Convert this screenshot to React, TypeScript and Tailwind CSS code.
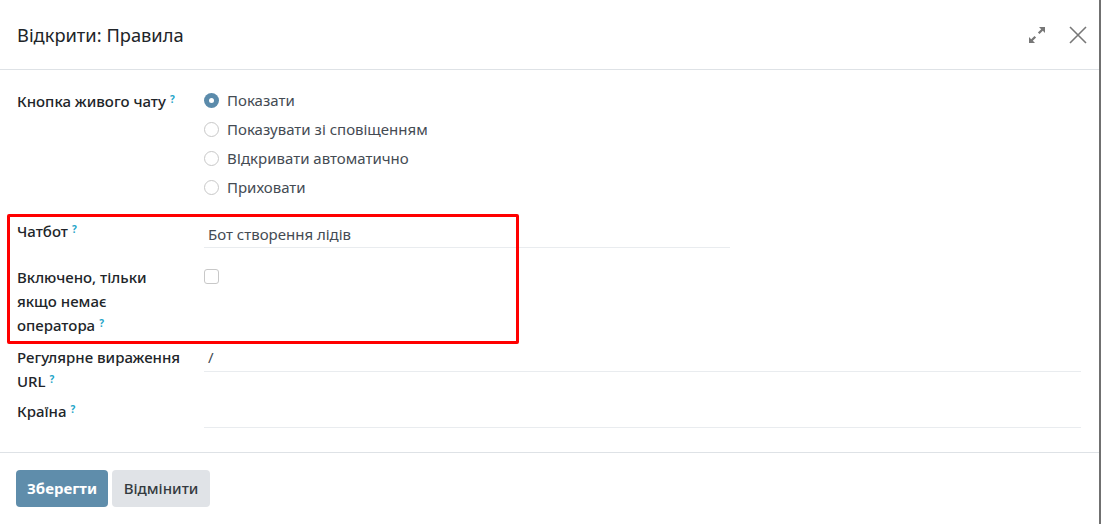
import React from "react";

const Q = () => (
  <sup className="relative -top-[4px] ml-[4px] text-[10px] font-bold leading-none text-[#1fa5c8]">?</sup>
);

function Radio({ checked, label }: { checked?: boolean; label: string }) {
  return (
    <div className="flex h-[29px] items-center">
      {checked ? (
        <span className="flex h-[15px] w-[15px] items-center justify-center rounded-full bg-[#5b8bab]">
          <span className="h-[5px] w-[5px] rounded-full bg-white" />
        </span>
      ) : (
        <span className="h-[15px] w-[15px] rounded-full border border-[#c8c8c8] bg-white" />
      )}
      <span className="ml-[8px] text-[15px] text-[#444b53]">{label}</span>
    </div>
  );
}

const labelCls = "w-[187px] pr-[17px] text-[15px] font-medium leading-[24px] text-[#212529]";

export default function App() {
  return (
    <div
      className="relative h-[524px] w-[1101px] overflow-hidden bg-white text-[#212529]"
      style={{ fontFamily: '"Noto Sans", "Open Sans", sans-serif' }}
    >
      <div className="flex h-full w-[1099px] flex-col">
        {/* header */}
        <div className="flex h-[70px] items-center border-b border-[#dee2e6] pl-[17px] pr-[12px]">
          <h1 className="flex-1 text-[18.3px] font-normal text-[#212529]">Відкрити: Правила</h1>
          <svg width="20" height="20" viewBox="0 0 20 20" className="mr-[22px]" fill="#777">
            <path d="M12 2h6v6l-2.2-2.2-3.3 3.3-1.6-1.6 3.3-3.3z" />
            <path d="M8 18H2v-6l2.2 2.2 3.3-3.3 1.6 1.6-3.3 3.3z" />
          </svg>
          <svg width="18" height="18" viewBox="0 0 18 18" stroke="#777" strokeWidth="1.6" fill="none">
            <path d="M1 1l16 16M17 1L1 17" />
          </svg>
        </div>

        {/* body */}
        <div className="relative flex-1 pl-[17px] pr-[18px] pt-[16px]">
          <div className="flex">
            <div className={`${labelCls} pt-[3px]`}>
              Кнопка живого чату<Q />
            </div>
            <div className="flex flex-col">
              <Radio checked label="Показати" />
              <Radio label="Показувати зі сповіщенням" />
              <Radio label="ВІдкривати автоматично" />
              <Radio label="Приховати" />
            </div>
          </div>

          <div className="mt-[17px] flex">
            <div className={labelCls}>
              Чатбот<Q />
            </div>
            <div className="w-[526px] border-b border-[#e9ecef] pb-[2px] pl-[4px] pt-[4px] text-[15px] leading-[22px] text-[#444b53]">
              Бот створення лідів
            </div>
          </div>

          <div className="mt-[17px] flex">
            <div className={labelCls}>
              Включено, тільки якщо немає оператора<Q />
            </div>
            <div className="pt-[4px]">
              <span className="block h-[15px] w-[15px] rounded-[3px] border border-[#c8c8c8] bg-white" />
            </div>
          </div>

          <div className="mt-[8px] flex">
            <div className={labelCls}>
              Регулярне вираження URL<Q />
            </div>
            <div className="h-[27px] flex-1 border-b border-[#e9ecef] pl-[4px] pt-[1px] text-[15px] leading-[22px] text-[#444b53]">
              /
            </div>
          </div>

          <div className="mt-[6px] flex">
            <div className={labelCls}>
              Країна<Q />
            </div>
            <div className="h-[29px] flex-1 border-b border-[#e9ecef]" />
          </div>
        </div>

        {/* footer */}
        <div className="flex h-[72px] items-start gap-[4px] border-t border-[#dee2e6] pl-[16px] pt-[17px]">
          <button className="h-[37px] w-[92px] rounded-[4px] bg-[#5f8dab] text-[15px] font-bold text-white">
            Зберегти
          </button>
          <button className="h-[37px] w-[98px] rounded-[4px] bg-[#e0e3e7] text-[15px] font-medium text-[#343a40]">
            Відмінити
          </button>
        </div>
      </div>

      {/* right scrollbar edge */}
      <div className="absolute right-0 top-0 h-full w-[2px] bg-[#707070]" />

      {/* red annotation box */}
      <div className="pointer-events-none absolute left-[7px] top-[214px] h-[130px] w-[512px] rounded-[2px] border-[3px] border-[#ff0000]" />
    </div>
  );
}
